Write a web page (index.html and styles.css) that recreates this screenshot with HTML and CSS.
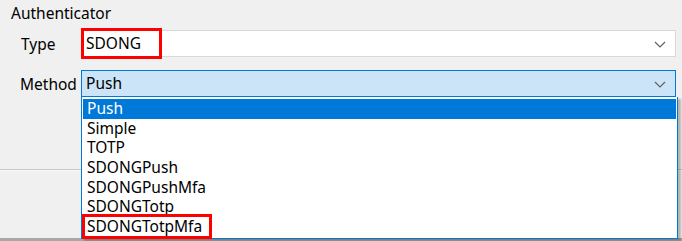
FILE: index.html
```html
<!DOCTYPE html>
<html>
<head>
<meta charset="utf-8">
<link rel="stylesheet" href="styles.css">
</head>
<body>
<div class="panel">
  <div class="group-title">Authenticator</div>
  <div class="form">
    <div class="row row-type">
      <span class="label">Type</span>
      <div class="combo">
        <span class="value">SDONG</span>
        <span class="mark mark-type"></span>
        <svg class="chev" width="12" height="7" viewBox="0 0 12 7"><path d="M1 1 L6 6 L11 1" fill="none" stroke="#606060" stroke-width="1.2"/></svg>
      </div>
    </div>
    <div class="row row-method">
      <span class="label">Method</span>
      <div class="combo combo-open">
        <span class="value">Push</span>
        <svg class="chev" width="12" height="7" viewBox="0 0 12 7"><path d="M1 1 L6 6 L11 1" fill="none" stroke="#606060" stroke-width="1.2"/></svg>
        <ul class="list">
          <li class="sel">Push</li>
          <li>Simple</li>
          <li>TOTP</li>
          <li>SDONGPush</li>
          <li>SDONGPushMfa</li>
          <li>SDONGTotp</li>
          <li class="marked">SDONGTotpMfa<span class="mark mark-item"></span></li>
        </ul>
      </div>
    </div>
  </div>
  <div class="footer"></div>
</div>
</body>
</html>
```

FILE: styles.css
```css
html, body {
  margin: 0;
  padding: 0;
  background: #f0f0f0;
  width: 682px;
  height: 241px;
  overflow: hidden;
  font-family: "Noto Sans", "Open Sans", sans-serif;
  font-size: 15.5px;
  color: #000;
}
.panel {
  display: flex;
  flex-direction: column;
  height: 241px;
}
.group-title {
  padding: 1px 0 0 11px;
  height: 30px;
  box-sizing: border-box;
  line-height: 24px;
}
.form {
  display: flex;
  flex-direction: column;
  gap: 13px;
  padding-right: 6px;
}
.row {
  display: flex;
  align-items: center;
  height: 27px;
}
.label {
  width: 81px;
  box-sizing: border-box;
  padding-left: 21px;
}
.row-method .label { padding-left: 20px; }
.combo {
  position: relative;
  flex: 1;
  height: 27px;
  box-sizing: border-box;
  background: #fff;
  border: 1px solid #d9d9d9;
  display: flex;
  align-items: center;
  padding-left: 4px;
}
.combo-open {
  background: #cce4f7;
  border-color: #0078d7;
}
.value { line-height: 25px; }
.chev {
  position: absolute;
  right: 9px;
  top: 10px;
}
.mark {
  position: absolute;
  border: 3px solid #ff0000;
  box-sizing: border-box;
}
.mark-type {
  left: -1px;
  top: -3px;
  width: 81px;
  height: 31px;
}
.list {
  position: absolute;
  left: -1px;
  top: 26px;
  width: 597px;
  height: 142px;
  margin: 0;
  padding: 2px 1px 1px;
  list-style: none;
  box-sizing: border-box;
  background: #fff;
  border: 1px solid #0078d7;
  border-top: none;
  box-shadow: 3px 2px 2px rgba(0,0,0,0.25);
  z-index: 2;
}
.list li {
  position: relative;
  height: 19.7px;
  line-height: 19.7px;
  padding-left: 4px;
}
.list li.sel {
  background: #0078d7;
  color: #fff;
}
.mark-item {
  left: -1px;
  top: -3px;
  width: 130px;
  height: 25px;
}
.footer {
  margin-top: 72px;
  flex: 1;
  border-top: 1px solid #c8c8c8;
  box-shadow: inset 0 1px 0 #fafafa;
  border-bottom: 3px solid #a8a8a8;
}
```
